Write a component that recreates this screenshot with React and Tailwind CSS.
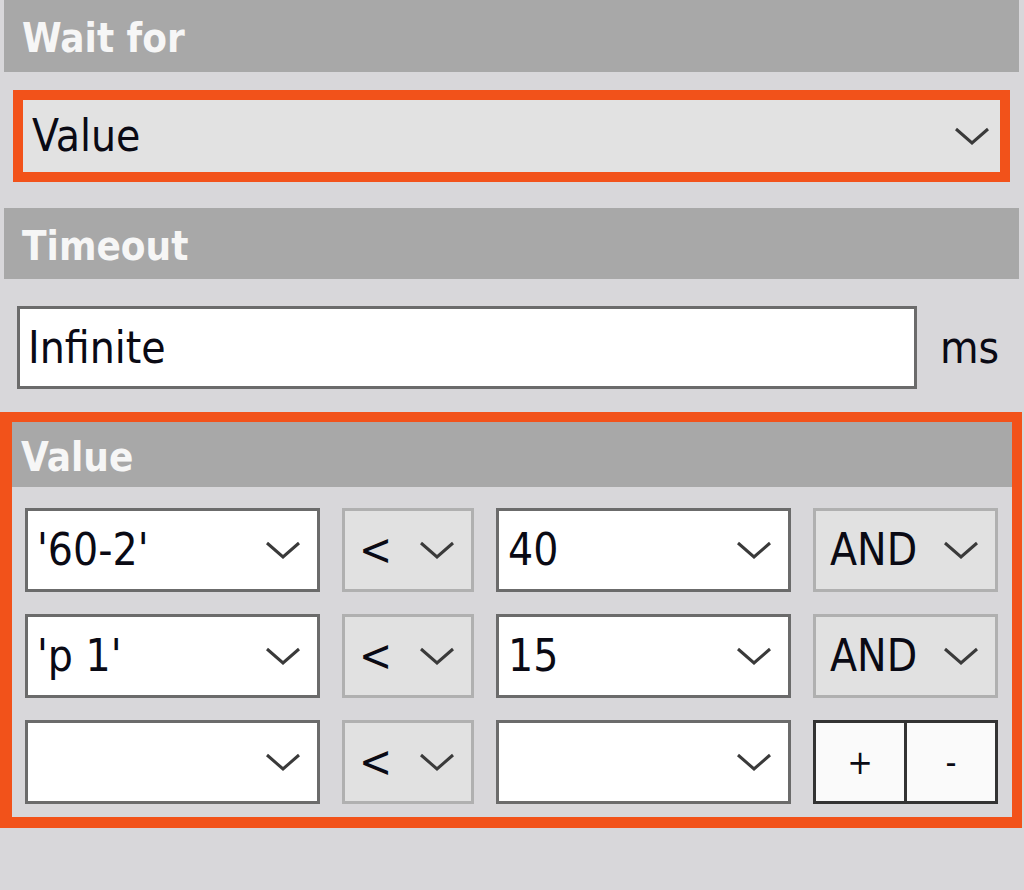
import React from "react";

const rows = [
  { field: "'60-2'", op: "<", value: "40", join: "AND" },
  { field: "'p 1'", op: "<", value: "15", join: "AND" },
  { field: "", op: "<", value: "", join: null },
];

function Chevron() {
  return (
    <svg width="36" height="20" viewBox="0 0 36 20" className="shrink-0">
      <path d="M2 3 L18 17 L34 3" fill="none" stroke="#3a3a3a" strokeWidth="3" />
    </svg>
  );
}

function SectionHeader({ children, className = "" }) {
  return (
    <div className={`flex items-center h-full bg-[#a8a8a8] pt-[4px] text-[40px] font-bold text-[#f6f6f6] ${className}`}>
      {children}
    </div>
  );
}

function WhiteCombo({ text, width }) {
  return (
    <div className={`${width} flex items-center justify-between border-[3px] border-[#6b6b6b] bg-white pl-[9px] pr-[16px]`}>
      <span>{text}</span>
      <Chevron />
    </div>
  );
}

function GrayCombo({ text, width }) {
  return (
    <div className={`${width} flex items-center justify-between border-[3px] border-[#b0b0b0] bg-[#e1e1e1] pl-[14px] pr-[16px]`}>
      <span>{text}</span>
      <Chevron />
    </div>
  );
}

export default function App() {
  return (
    <div className="w-[1024px] h-[890px] overflow-hidden bg-[#d8d7da] text-[44px] leading-none text-[#0a0a14] font-['DejaVu_Sans_Condensed','DejaVu_Sans',sans-serif] font-stretch-condensed">
      <div className="h-[72px] ml-[4px] mr-[5px]">
        <SectionHeader className="pl-[18px]">Wait for</SectionHeader>
      </div>

      <div className="mt-[18px] ml-[13px] mr-[14px] h-[92px] flex items-center justify-between border-[10px] border-[#f2521a] bg-[#e2e2e2] pl-[9px] pr-[10px]">
        <span>Value</span>
        <Chevron />
      </div>

      <div className="mt-[26px] h-[71px] ml-[4px] mr-[5px]">
        <SectionHeader className="pl-[18px]">Timeout</SectionHeader>
      </div>

      <div className="mt-[27px] flex items-center h-[83px] pl-[17px]">
        <div className="w-[900px] h-full flex items-center border-[3px] border-[#6b6b6b] bg-white pl-[8px]">
          Infinite
        </div>
        <span className="ml-[23px]">ms</span>
      </div>

      <div className="mt-[23px] w-[1022px] border-[10px] border-l-[12px] border-b-[11px] border-[#f2521a]">
        <div className="h-[65px]">
          <SectionHeader className="pl-[9px]">Value</SectionHeader>
        </div>
        <div className="flex flex-col gap-[22px] pt-[21px] pb-[13px] pl-[13px]">
          {rows.map((r, i) => (
            <div key={i} className="flex h-[84px] gap-[22px]">
              <WhiteCombo text={r.field} width="w-[295px]" />
              <GrayCombo text={r.op} width="w-[132px]" />
              <WhiteCombo text={r.value} width="w-[295px]" />
              {r.join ? (
                <GrayCombo text={r.join} width="w-[185px]" />
              ) : (
                <div className="w-[185px] flex border-[3px] border-[#333] bg-[#fafafa] text-[34px]">
                  <button className="flex-1 flex items-center justify-center border-r-[3px] border-[#333]">+</button>
                  <button className="flex-1 flex items-center justify-center">-</button>
                </div>
              )}
            </div>
          ))}
        </div>
      </div>
    </div>
  );
}
